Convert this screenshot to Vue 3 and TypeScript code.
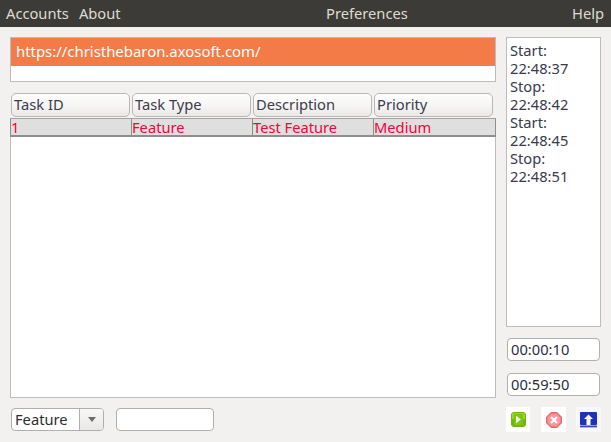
<template>
  <div class="window">
    <nav class="menubar">
      <div class="menu-left">
        <span v-for="item in leftMenu" :key="item">{{ item }}</span>
      </div>
      <span class="menu-center">Preferences</span>
      <span class="menu-right">Help</span>
    </nav>

    <div class="content">
      <div class="left-col">
        <div class="url-box">
          <div class="url-selected">https://christhebaron.axosoft.com/</div>
        </div>

        <div class="table-wrap">
          <div class="table-head">
            <button v-for="col in columns" :key="col" class="head-btn">{{ col }}</button>
          </div>
          <div class="table-body">
            <div class="row">
              <div v-for="(cell, i) in rowCells" :key="i" class="cell">{{ cell }}</div>
            </div>
          </div>
        </div>

        <div class="bottom-bar">
          <div class="combo">
            <span class="combo-text">Feature</span>
            <span class="combo-arrow"><i class="arrow" /></span>
          </div>
          <input class="text-input" type="text" />
        </div>
      </div>

      <div class="right-col">
        <div class="log">
          <div v-for="(line, i) in logLines" :key="i">{{ line }}</div>
        </div>
        <div class="time-box">00:00:10</div>
        <div class="time-box">00:59:50</div>
        <div class="actions">
          <span class="action-btn play">
            <svg width="15" height="15" viewBox="0 0 15 15">
              <path d="M2 0h11l2 2v11l-2 2H2l-2-2V2z" fill="#6fb512" />
              <path d="M2 1h11l1 1v5H1V2z" fill="#93d926" />
              <rect x="3" y="2" width="9" height="11" fill="#7cc416" />
              <path d="M5 3.5l5 4-5 4z" fill="#eef8dc" />
            </svg>
          </span>
          <span class="action-btn stop">
            <svg width="16" height="16" viewBox="0 0 16 16">
              <path d="M5 0h6l5 5v6l-5 5H5l-5-5V5z" fill="#f2686e" />
              <path d="M5.5 1.5h5l4 4v5l-4 4h-5l-4-4v-5z" fill="#fb9598" />
              <path d="M5 5l6 6M11 5l-6 6" stroke="#fff" stroke-width="2.4" />
            </svg>
          </span>
          <span class="action-btn upload">
            <svg width="17" height="16" viewBox="0 0 17 16">
              <rect x="0" y="0" width="17" height="13" rx="1" fill="#1f33b8" />
              <rect x="0" y="13" width="17" height="1" fill="#8f9be0" />
              <rect x="0" y="14" width="17" height="1.4" fill="#3446c2" />
              <path d="M8.5 2.5l4.5 4.5h-2.5v6h-4V7H4z" fill="#fff" />
            </svg>
          </span>
        </div>
      </div>
    </div>
  </div>
</template>

<script setup lang="ts">
const leftMenu: string[] = ["Accounts", "About"];
const columns: string[] = ["Task ID", "Task Type", "Description", "Priority"];
const rowCells: string[] = ["1", "Feature", "Test Feature", "Medium"];
const logLines: string[] = [
  "Start:",
  "22:48:37",
  "Stop:",
  "22:48:42",
  "Start:",
  "22:48:45",
  "Stop:",
  "22:48:51",
];
</script>

<style>
html,
body {
  margin: 0;
  background: #f2f1f0;
}
</style>

<style scoped>
.window {
  width: 611px;
  height: 442px;
  overflow: hidden;
  background: #f2f1f0;
  font-family: "Noto Sans", "Open Sans", sans-serif;
  font-size: 14.7px;
  color: #3c3c3c;
  display: flex;
  flex-direction: column;
}

.menubar {
  height: 27px;
  box-sizing: border-box;
  flex: none;
  background: #3c3b37;
  color: #dfdbd2;
  display: flex;
  align-items: center;
  padding: 0 7px 2px 6px;
}

.menu-left {
  width: 320px;
  display: flex;
  gap: 10px;
}

.menu-right {
  margin-left: auto;
}

.content {
  flex: 1;
  display: flex;
  gap: 10px;
  padding: 10px 10px 0;
}

.left-col {
  width: 486px;
  display: flex;
  flex-direction: column;
}

.url-box {
  height: 45px;
  box-sizing: border-box;
  background: #fff;
  border: 1px solid #bdbcba;
}

.url-selected {
  height: 28px;
  line-height: 26px;
  padding-left: 5px;
  background: #f37b48;
  color: #fff;
  font-size: 14.9px;
}

.table-wrap {
  margin-top: 10px;
  height: 306px;
  box-sizing: border-box;
  display: flex;
  flex-direction: column;
}

.table-head {
  display: flex;
  gap: 2px;
  padding: 1px 2px 1px 1px;
  height: 26px;
  box-sizing: border-box;
  flex: none;
}

.head-btn {
  width: 119px;
  flex: none;
  margin: 0;
  padding: 0 0 2px 2px;
  text-align: left;
  font: inherit;
  color: #3c3c4c;
  border: 1px solid #b9b8b6;
  border-radius: 5px;
  background: linear-gradient(#fdfdfd, #f6f5f4 55%, #e9e8e6);
}

.table-body {
  flex: 1;
  background: #fff;
  border: 1px solid #bdbcba;
  border-top: 0;
}

.row {
  height: 19px;
  box-sizing: border-box;
  display: flex;
  background: #dfdfdf;
  border-top: 1px solid #a5a4a2;
  border-bottom: 2px solid #8f8e8c;
  border-left: 1px solid #8f8e8c;
  border-right: 1px solid #8f8e8c;
  margin: 0 -1px;
  line-height: 16px;
  color: #f4003c;
}

.cell {
  width: 121px;
  flex: none;
  box-sizing: border-box;
  border-right: 1px solid #8f8e8c;
}

.cell:last-child {
  flex: 1;
  border-right: 0;
}

.bottom-bar {
  margin-top: 10px;
  padding-left: 1px;
  display: flex;
  gap: 12px;
}

.combo {
  width: 93px;
  height: 23px;
  box-sizing: border-box;
  display: flex;
  background: #fff;
  border: 1px solid #b0afad;
  border-radius: 4px;
  overflow: hidden;
}

.combo-text {
  flex: 1;
  padding-left: 3px;
  line-height: 20px;
  color: #2e2e2e;
}

.combo-arrow {
  width: 23px;
  display: flex;
  align-items: center;
  justify-content: center;
  border-left: 1px solid #b0afad;
  background: linear-gradient(#f8f7f6, #e9e8e6);
}

.arrow {
  width: 0;
  height: 0;
  border-left: 4px solid transparent;
  border-right: 4px solid transparent;
  border-top: 5px solid #6e6e6e;
}

.text-input {
  width: 98px;
  height: 23px;
  box-sizing: border-box;
  background: #fff;
  border: 1px solid #b0afad;
  border-radius: 4px;
  padding: 0;
  outline: none;
}

.right-col {
  width: 95px;
  display: flex;
  flex-direction: column;
}

.log {
  height: 290px;
  box-sizing: border-box;
  background: #fff;
  border: 1px solid #bdbcba;
  padding: 3px 3px;
  line-height: 18px;
  color: #3a3a4a;
}

.time-box {
  width: 93px;
  height: 23px;
  box-sizing: border-box;
  margin: 11px 0 0 1px;
  background: #fff;
  border: 1px solid #b0afad;
  border-radius: 4px;
  padding-left: 3px;
  line-height: 20px;
  color: #2e2e3a;
}

.time-box + .time-box {
  margin-top: 12px;
}

.actions {
  margin-top: 11px;
  display: flex;
}

.action-btn {
  height: 25px;
  background: #fff;
  display: flex;
  align-items: center;
  justify-content: center;
  flex: none;
}

.play {
  width: 24px;
}

.stop {
  width: 25px;
  margin-left: 11px;
}

.upload {
  width: 25px;
  margin-left: 10px;
  background: #f7f8fd;
}
</style>
